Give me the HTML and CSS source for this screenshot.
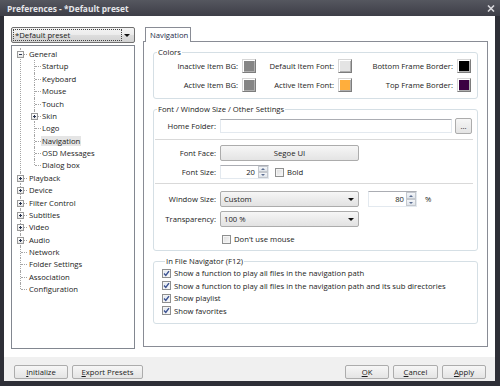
FILE: index.html
```html
<!DOCTYPE html>
<html lang="en">
<head>
    <meta charset="UTF-8">
    <meta name="viewport" content="width=device-width, initial-scale=1.0">
    <title>Preferences</title>
    <link rel="stylesheet" href="styles.css">
</head>
<body>
    <div class="window">
        <div class="titlebar">
            <span class="title">Preferences - *Default preset</span>
            <svg class="close" width="8" height="7" viewBox="0 0 8 7"><path d="M1 0.5 L7 6.5 M7 0.5 L1 6.5" stroke="#d8d8dc" stroke-width="1.6"/></svg>
        </div>
        <div class="client">
            <div class="main">
                <div class="side">
                    <div class="preset">
                        <span class="preset-text">*Default preset</span>
                        <span class="arrow"></span>
                    </div>
                    <div class="tree-box">
                        <ul class="tree">
                            <li><span class="exp minus"></span>General
                                <ul>
                                    <li>Startup</li>
                                    <li>Keyboard</li>
                                    <li>Mouse</li>
                                    <li>Touch</li>
                                    <li><span class="exp plus"></span>Skin</li>
                                    <li>Logo</li>
                                    <li><span class="selected">Navigation</span></li>
                                    <li>OSD Messages</li>
                                    <li>Dialog box</li>
                                </ul>
                            </li>
                            <li><span class="exp plus"></span>Playback</li>
                            <li><span class="exp plus"></span>Device</li>
                            <li><span class="exp plus"></span>Filter Control</li>
                            <li><span class="exp plus"></span>Subtitles</li>
                            <li><span class="exp plus"></span>Video</li>
                            <li><span class="exp plus"></span>Audio</li>
                            <li>Network</li>
                            <li>Folder Settings</li>
                            <li>Association</li>
                            <li>Configuration</li>
                        </ul>
                    </div>
                </div>

                <div class="pane">
                    <div class="tabs"><span class="tab">Navigation</span></div>
                    <div class="tab-panel">
                        <fieldset class="group colors">
                            <legend>Colors</legend>
                            <div class="color-grid">
                                <span class="clabel">Inactive Item BG:</span><span class="swatch sw-gray"></span>
                                <span class="clabel">Default Item Font:</span><span class="swatch sw-light"></span>
                                <span class="clabel">Bottom Frame Border:</span><span class="swatch sw-black"></span>
                                <span class="clabel">Active Item BG:</span><span class="swatch sw-gray"></span>
                                <span class="clabel">Active Item Font:</span><span class="swatch sw-orange"></span>
                                <span class="clabel">Top Frame Border:</span><span class="swatch sw-purple"></span>
                            </div>
                        </fieldset>

                        <fieldset class="group settings">
                            <legend>Font / Window Size / Other Settings</legend>
                            <div class="row home-row">
                                <label class="rlabel">Home Folder:</label>
                                <input class="textbox" type="text" value="">
                                <button class="btn dots">...</button>
                            </div>
                            <hr class="sep">
                            <div class="row face-row">
                                <label class="rlabel">Font Face:</label>
                                <button class="btn face">Segoe UI</button>
                            </div>
                            <div class="row size-row">
                                <label class="rlabel">Font Size:</label>
                                <span class="spin">
                                    <span class="spin-val">20</span>
                                    <span class="spin-btns"><span class="up"></span><span class="down"></span></span>
                                </span>
                                <span class="check bold-check"></span>
                                <span>Bold</span>
                            </div>
                            <hr class="sep sep2">
                            <div class="row win-row">
                                <label class="rlabel">Window Size:</label>
                                <span class="combo">Custom<span class="arrow"></span></span>
                                <span class="spin pct">
                                    <span class="spin-val">80</span>
                                    <span class="spin-btns"><span class="up"></span><span class="down"></span></span>
                                </span>
                                <span class="unit">%</span>
                            </div>
                            <div class="row trans-row">
                                <label class="rlabel">Transparency:</label>
                                <span class="combo">100 %<span class="arrow"></span></span>
                            </div>
                            <div class="row mouse-row">
                                <span class="rlabel"></span>
                                <span class="check"></span>
                                <span>Don't use mouse</span>
                            </div>
                        </fieldset>

                        <fieldset class="group navigator">
                            <legend>In File Navigator (F12)</legend>
                            <div class="crow"><span class="check on"><svg width="7" height="7" viewBox="0 0 7 7"><path d="M1 3.6 L2.8 5.5 L6 1.2" fill="none" stroke="#3b5190" stroke-width="1.4"/></svg></span>Show a function to play all files in the navigation path</div>
                            <div class="crow"><span class="check on"><svg width="7" height="7" viewBox="0 0 7 7"><path d="M1 3.6 L2.8 5.5 L6 1.2" fill="none" stroke="#3b5190" stroke-width="1.4"/></svg></span>Show a function to play all files in the navigation path and its sub directories</div>
                            <div class="crow"><span class="check on"><svg width="7" height="7" viewBox="0 0 7 7"><path d="M1 3.6 L2.8 5.5 L6 1.2" fill="none" stroke="#3b5190" stroke-width="1.4"/></svg></span>Show playlist</div>
                            <div class="crow"><span class="check on"><svg width="7" height="7" viewBox="0 0 7 7"><path d="M1 3.6 L2.8 5.5 L6 1.2" fill="none" stroke="#3b5190" stroke-width="1.4"/></svg></span>Show favorites</div>
                        </fieldset>
                    </div>
                </div>
            </div>

            <div class="footer">
                <button class="btn foot w-init"><u>I</u>nitialize</button>
                <button class="btn foot w-export"><u>E</u>xport Presets</button>
                <span class="spacer"></span>
                <button class="btn foot w-ok"><u>O</u>K</button>
                <button class="btn foot w-cancel"><u>C</u>ancel</button>
                <button class="btn foot w-apply"><u>A</u>pply</button>
            </div>
        </div>
    </div>
</body>
</html>
```

FILE: styles.css
```css
body {
    margin: 0;
    background-color: #2c2d35;
    font-family: "Open Sans", "Noto Sans", sans-serif;
    font-size: 7.7px;
    color: #1b1b1b;
}

.window {
    width: 500px;
    height: 386px;
    display: flex;
    flex-direction: column;
    background: #2e2f37;
}

.titlebar {
    height: 16px;
    display: flex;
    align-items: center;
    justify-content: space-between;
    padding: 0 5px 0 7px;
    background: linear-gradient(#55575f, #3d3e47);
}

.title {
    color: #e6e6ea;
    font-weight: bold;
    font-size: 8.4px;
}

.client {
    flex: 1;
    display: flex;
    flex-direction: column;
    margin: 0 5px 5px 4px;
    background-color: #fff;
}

.main {
    height: 341px;
    display: flex;
    gap: 8px;
    padding: 11px 7px 0 7px;
    box-sizing: border-box;
}

/* left side: preset + tree */
.side {
    width: 124px;
    display: flex;
    flex-direction: column;
}

.preset {
    height: 16px;
    box-sizing: border-box;
    border: 1px solid #707070;
    border-radius: 2px;
    background: linear-gradient(#f4f4f4 0%, #ebebeb 50%, #dddddd 51%, #d2d2d2 100%);
    display: flex;
    align-items: center;
    justify-content: space-between;
    padding: 0 4px 0 1px;
}

.preset-text {
    border: 1px dotted #444;
    width: 106px;
    line-height: 10px;
    padding-left: 1px;
}

.arrow {
    width: 0;
    height: 0;
    border-left: 3px solid transparent;
    border-right: 3px solid transparent;
    border-top: 3px solid #111;
}

.tree-box {
    margin-top: 2px;
    height: 304px;
    box-sizing: border-box;
    border: 1px solid #828790;
    background: #fff;
    padding-top: 2px;
}

.tree, .tree ul {
    list-style: none;
    margin: 0;
    padding: 0;
}

.tree li {
    position: relative;
    padding-left: 17px;
    line-height: 12.37px;
}

/* dotted tree lines */
.tree li::before {
    content: '';
    position: absolute;
    left: 8px;
    top: 0;
    bottom: 0;
    border-left: 1px dotted #a5a5a5;
}

.tree li::after {
    content: '';
    position: absolute;
    left: 9px;
    top: 6px;
    width: 6px;
    border-top: 1px dotted #a5a5a5;
}

.tree li:last-child::before {
    bottom: auto;
    height: 6px;
}

.tree ul li {
    padding-left: 13px;
}

.tree ul li::before {
    left: 5px;
}

.tree ul li::after {
    left: 6px;
}

.exp {
    position: absolute;
    left: 5px;
    top: 3px;
    width: 7px;
    height: 7px;
    box-sizing: border-box;
    border: 1px solid #9a9a9a;
    background: linear-gradient(#fff, #e6e6e6);
    z-index: 1;
}

.tree ul .exp {
    left: 2px;
}

.exp::before {
    content: '';
    position: absolute;
    left: 1px;
    top: 2px;
    width: 3px;
    height: 1px;
    background: #26324d;
}

.exp.plus::after {
    content: '';
    position: absolute;
    left: 2px;
    top: 1px;
    width: 1px;
    height: 3px;
    background: #26324d;
}

.selected {
    background-color: #e5e5e5;
    padding: 0 1px;
    margin-left: -1px;
}

/* right side: tab + panel */
.pane {
    flex: 1;
    display: flex;
    flex-direction: column;
}

.tabs {
    height: 14px;
    padding-left: 2px;
    display: flex;
}

.tab {
    width: 46px;
    box-sizing: border-box;
    border: 1px solid #898c95;
    border-bottom: none;
    background: #fff;
    padding-left: 4px;
    line-height: 14px;
    height: 15px;
    position: relative;
    z-index: 1;
    color: #1d2a48;
}

.tab-panel {
    height: 306px;
    box-sizing: border-box;
    border: 1px solid #898c95;
    padding: 5px 9px 0 9px;
    display: flex;
    flex-direction: column;
    gap: 5px;
}

.group {
    margin: 0;
    min-width: 0;
    border: 1px solid #d5dfe5;
    border-radius: 3px;
    padding: 0;
}

.group legend {
    margin-left: 3px;
    padding: 0 1px;
    line-height: 11px;
}

.colors {
    padding: 1px 0 6px 0;
}

.color-grid {
    display: grid;
    grid-template-columns: 84px 14px 74px 14px 97px 14px;
    column-gap: 4px;
    row-gap: 5px;
    align-items: center;
}

.clabel {
    text-align: right;
}

.swatch {
    width: 14px;
    height: 14px;
    box-sizing: border-box;
    border: 1px solid;
    border-color: #d6d6d6 #7d7d7d #7d7d7d #d6d6d6;
    box-shadow: inset 1px 1px 0 #fff, inset -1px -1px 0 #b0b0b0;
}

.sw-gray { background-color: #858585; }
.sw-light { background-color: #e4e4e4; }
.sw-orange { background-color: #ffae3c; }
.sw-black { background-color: #000; }
.sw-purple { background-color: #3b0042; }

.settings {
    padding: 3px 5px 5px 0;
}

.row {
    display: flex;
    align-items: center;
}

.rlabel {
    width: 62px;
    flex: none;
    text-align: right;
    margin-right: 4px;
}

.home-row {
    height: 16px;
}

.textbox {
    flex: 1;
    height: 14px;
    box-sizing: border-box;
    margin: 0;
    border: 1px solid #e3e9ef;
    border-top-color: #abadb3;
    background: #fff;
    font: inherit;
    padding: 0 2px;
}

.btn {
    font: inherit;
    color: #1b1b1b;
    margin: 0;
    padding: 0;
    border: 1px solid #acacac;
    border-radius: 2px;
    background: linear-gradient(#f6f6f6, #e4e4e4);
    box-sizing: border-box;
}

.dots {
    width: 17px;
    height: 16px;
    margin-left: 3px;
    line-height: 10px;
}

.sep {
    border: 0;
    border-top: 1px solid #d9d9d9;
    margin: 5px -1px 5px 1px;
}

.sep2 {
    margin: 4px -1px 7px 1px;
}

.face {
    width: 139px;
    height: 16px;
}

.size-row {
    margin-top: 4px;
    height: 14px;
}

.spin {
    width: 49px;
    height: 14px;
    box-sizing: border-box;
    border: 1px solid #e3e9ef;
    border-top-color: #abadb3;
    display: flex;
}

.spin-val {
    flex: 1;
    text-align: right;
    padding-right: 3px;
    line-height: 12px;
}

.spin-btns {
    width: 10px;
    display: flex;
    flex-direction: column;
}

.spin-btns span {
    flex: 1;
    border: 1px solid #c4c8ce;
    background: linear-gradient(#f4f6f9, #dfe4ea);
    display: flex;
    align-items: center;
    justify-content: center;
}

.spin-btns .up::before {
    content: '';
    border-left: 2px solid transparent;
    border-right: 2px solid transparent;
    border-bottom: 2px solid #5c6f92;
}

.spin-btns .down::before {
    content: '';
    border-left: 2px solid transparent;
    border-right: 2px solid transparent;
    border-top: 2px solid #5c6f92;
}

.check {
    width: 9px;
    height: 9px;
    box-sizing: border-box;
    flex: none;
    border: 1px solid #8e8f8f;
    background: linear-gradient(135deg, #dcdcdc, #f8f8f8);
    box-shadow: inset 0 0 0 1px #f4f4f4;
    display: flex;
    align-items: center;
    justify-content: center;
    margin-right: 3px;
}

.bold-check {
    margin-left: 6px;
}

.win-row {
    margin-top: 0;
    height: 16px;
}

.combo {
    width: 139px;
    height: 16px;
    box-sizing: border-box;
    border: 1px solid #acacac;
    border-radius: 2px;
    background: linear-gradient(#f6f6f6, #e2e2e2);
    display: flex;
    align-items: center;
    justify-content: space-between;
    padding: 0 4px 0 3px;
}

.pct {
    height: 16px;
    margin-left: 9px;
}

.pct .spin-val {
    line-height: 14px;
    padding-right: 2px;
}

.unit {
    margin-left: 8px;
}

.trans-row {
    margin-top: 4px;
    height: 16px;
}

.mouse-row {
    margin-top: 6px;
    height: 12px;
}

.mouse-row .check {
    margin-left: 2px;
}

.navigator {
    padding: 0 0 6px 8px;
}

.crow {
    display: flex;
    align-items: center;
    height: 12.5px;
}

.check.on {
    background: linear-gradient(135deg, #dde4ee, #f9fbfd);
}

.footer {
    flex: 1;
    display: flex;
    gap: 4px;
    padding: 8px 9px 0 10px;
    background-color: #f0f0f0;
}

.spacer {
    flex: 1;
}

.foot {
    height: 14px;
    line-height: 12px;
}

.w-init { width: 54px; }
.w-export { width: 71px; }
.w-ok { width: 44px; }
.w-cancel { width: 45px; }
.w-apply { width: 44px; }
```
